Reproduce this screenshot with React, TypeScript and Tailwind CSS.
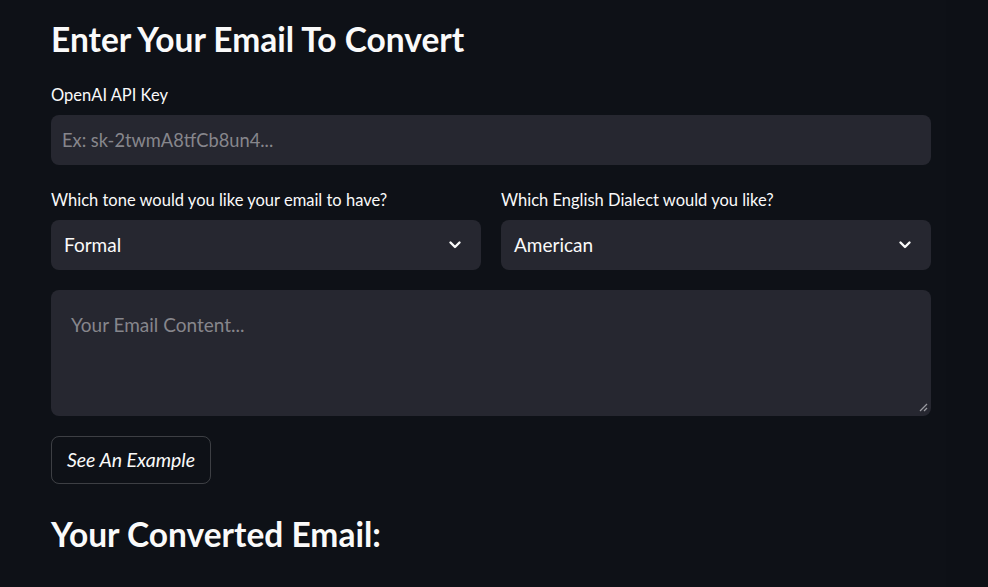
import React from "react";

const font = { fontFamily: "Lato, 'Noto Sans', sans-serif" };

function Chevron() {
  return (
    <svg width="14" height="14" viewBox="0 0 14 14" className="shrink-0">
      <polyline points="2.5,4.5 7,9 11.5,4.5" fill="none" stroke="#fafafa" strokeWidth="2.4" strokeLinecap="round" strokeLinejoin="round" />
    </svg>
  );
}

function Select({ label, value }: { label: string; value: string }) {
  return (
    <div className="flex flex-col flex-1 min-w-0">
      <div className="text-[16.5px] leading-[20px] text-[#fafafa] h-[20px] mb-[10px] mt-[0px]">{label}</div>
      <div className="h-[50px] rounded-[8px] bg-[#262730] flex items-center justify-between pl-[13px] pr-[19px]">
        <span className="text-[19px] text-[#fafafa]">{value}</span>
        <Chevron />
      </div>
    </div>
  );
}

export default function App() {
  return (
    <div className="min-h-[587px] w-full bg-[#0e1117] flex" style={font}>
      <div className="flex-1 flex">
        <div className="w-[880px] ml-[51px] flex flex-col">
          <h2 className="mt-[14px] h-[50px] leading-[50px] text-[33.5px] font-bold text-[#fafafa]">
            Enter Your Email To Convert
          </h2>
          <div className="mt-[21px] text-[16.5px] leading-[20px] h-[20px] text-[#fafafa]">OpenAI API Key</div>
          <input
            className="mt-[10px] h-[50px] rounded-[8px] bg-[#262730] px-[11px] text-[18.25px] text-[#fafafa] placeholder:text-[#86868c] outline-none"
            placeholder="Ex: sk-2twmA8tfCb8un4..."
          />
          <div className="mt-[25px] flex gap-[20px]">
            <Select label="Which tone would you like your email to have?" value="Formal" />
            <Select label="Which English Dialect would you like?" value="American" />
          </div>
          <div className="relative mt-[20px] h-[126px]">
            <textarea
              className="w-full h-full resize-none rounded-[8px] bg-[#262730] px-[20px] py-[22px] text-[19px] leading-[26px] text-[#fafafa] placeholder:text-[#86868c] outline-none"
              placeholder="Your Email Content..."
            />
            <svg className="absolute right-[3px] bottom-[4px]" width="9" height="9" viewBox="0 0 9 9">
              <line x1="8" y1="1" x2="1" y2="8" stroke="#9a9aa0" strokeWidth="1.2" />
              <line x1="8" y1="5" x2="5" y2="8" stroke="#9a9aa0" strokeWidth="1.2" />
            </svg>
          </div>
          <div className="mt-[20px]">
            <button className="h-[48px] w-[160px] rounded-[8px] border border-[rgba(250,250,250,0.2)] bg-transparent text-[19.5px] italic text-[#fafafa]">
              See An Example
            </button>
          </div>
          <h2 className="mt-[30px] h-[40px] leading-[40px] text-[33.5px] font-bold text-[#fafafa]">
            Your Converted Email:
          </h2>
        </div>
      </div>
      <div className="w-[42px] bg-[#0d1016]" />
    </div>
  );
}
